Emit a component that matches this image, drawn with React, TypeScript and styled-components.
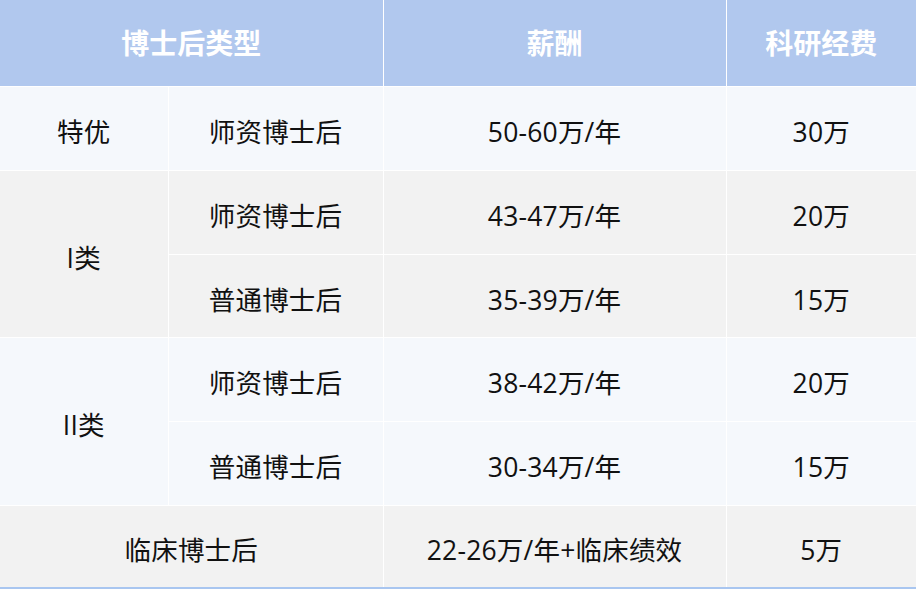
import React from "react";
import styled, { createGlobalStyle } from "styled-components";

const Global = createGlobalStyle`
  html, body { margin: 0; padding: 0; background: #ffffff; }
  body { font-family: "Open Sans", "Noto Sans CJK SC", sans-serif; }
`;

const Table = styled.table`
  width: 916px;
  border-collapse: collapse;
  table-layout: fixed;
  border-bottom: 2px solid #a9c6f0;
`;

const Col = styled.col<{ $w: number }>`
  width: ${(p) => p.$w}px;
`;

const HeadCell = styled.th<{ $edge?: "left" | "right" }>`
  height: 84px;
  padding: 0 0 2px;
  background: #b1c8ee;
  color: #ffffff;
  font-family: "Noto Sans CJK SC", sans-serif;
  font-size: 28px;
  font-weight: 700;
  text-align: center;
  border: 1px solid #ffffff;
  border-top: none;
  ${(p) => (p.$edge === "left" ? "border-left: none;" : "")}
  ${(p) => (p.$edge === "right" ? "border-right: none;" : "")}
`;

const Row = styled.tr<{ $h: number }>`
  height: ${(p) => p.$h}px;
`;

type Tone = "light" | "grey";

const Cell = styled.td<{ $tone: Tone }>`
  padding: 4px 0 0;
  background: ${(p) => (p.$tone === "light" ? "#f5f8fc" : "#f2f2f2")};
  color: #111111;
  font-size: 26.5px;
  letter-spacing: 0.2px;
  text-align: center;
  vertical-align: middle;
  border: 1px solid #ffffff;
  &:first-child { border-left: none; }
  &:last-child { border-right: none; }
`;

export default function App() {
  return (
    <>
      <Global />
      <Table>
        <colgroup>
          <Col $w={168} />
          <Col $w={215} />
          <Col $w={343} />
          <Col $w={190} />
        </colgroup>
        <thead>
          <tr>
            <HeadCell colSpan={2} $edge="left">博士后类型</HeadCell>
            <HeadCell>薪酬</HeadCell>
            <HeadCell $edge="right">科研经费</HeadCell>
          </tr>
        </thead>
        <tbody>
          <Row $h={84}>
            <Cell $tone="light">特优</Cell>
            <Cell $tone="light">师资博士后</Cell>
            <Cell $tone="light">50-60万/年</Cell>
            <Cell $tone="light">30万</Cell>
          </Row>
          <Row $h={84}>
            <Cell $tone="grey" rowSpan={2}>I类</Cell>
            <Cell $tone="grey">师资博士后</Cell>
            <Cell $tone="grey">43-47万/年</Cell>
            <Cell $tone="grey">20万</Cell>
          </Row>
          <Row $h={83}>
            <Cell $tone="grey">普通博士后</Cell>
            <Cell $tone="grey">35-39万/年</Cell>
            <Cell $tone="grey">15万</Cell>
          </Row>
          <Row $h={84}>
            <Cell $tone="light" rowSpan={2}>II类</Cell>
            <Cell $tone="light">师资博士后</Cell>
            <Cell $tone="light">38-42万/年</Cell>
            <Cell $tone="light">20万</Cell>
          </Row>
          <Row $h={84}>
            <Cell $tone="light">普通博士后</Cell>
            <Cell $tone="light">30-34万/年</Cell>
            <Cell $tone="light">15万</Cell>
          </Row>
          <Row $h={82}>
            <Cell $tone="grey" colSpan={2}>临床博士后</Cell>
            <Cell $tone="grey">22-26万/年+临床绩效</Cell>
            <Cell $tone="grey">5万</Cell>
          </Row>
        </tbody>
      </Table>
    </>
  );
}
